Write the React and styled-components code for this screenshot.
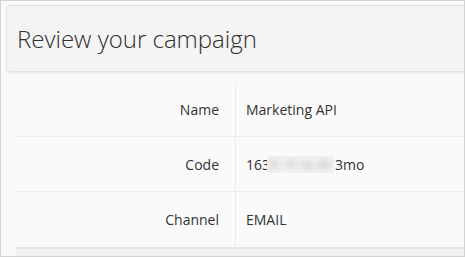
import React from 'react';
import styled, { createGlobalStyle } from 'styled-components';

const Global = createGlobalStyle`
  html, body {
    margin: 0;
    padding: 0;
    background: #ffffff;
  }
  body {
    font-family: "Open Sans", "Noto Sans", sans-serif;
    color: #333;
  }
`;

const Frame = styled.div`
  width: 465px;
  height: 257px;
  box-sizing: border-box;
  border: 1px solid #d3d3d3;
  background: #fafafa;
  overflow: hidden;
  padding: 4px 0 0 5px;
  display: flex;
  flex-direction: column;
  & > * {
    flex-shrink: 0;
  }
`;

const Header = styled.div`
  height: 67px;
  box-sizing: border-box;
  margin-right: -6px;
  background: #f4f4f4;
  border: 1px solid #e2e2e2;
  border-radius: 3px;
  box-shadow: 0 1px 2px rgba(0, 0, 0, 0.08);
  display: flex;
  align-items: center;
  padding-left: 10px;
  h1 {
    margin: 0;
    font-size: 24px;
    font-weight: 300;
    color: #2f2f2f;
  }
`;

const Table = styled.div`
  margin: 11px -4px 0 10px;
  display: flex;
  flex-direction: column;
  & > * {
    flex-shrink: 0;
  }
`;

const Row = styled.div`
  display: grid;
  grid-template-columns: 220px 1fr;
  height: ${(p) => p.h}px;
  border-bottom: 1px solid ${(p) => (p.last ? '#e6e6e6' : '#ececec')};
  box-sizing: border-box;
`;

const Label = styled.div`
  display: flex;
  align-items: center;
  justify-content: flex-end;
  padding-right: 16px;
  border-right: 1px solid #ececec;
  font-size: 14px;
  color: #333;
`;

const Value = styled.div`
  display: flex;
  align-items: center;
  padding-left: 10px;
  font-size: 14px;
  color: #333;
`;

const Redacted = styled.span`
  display: inline-block;
  width: 67px;
  height: 17px;
  margin: 0 1px 0 -3px;
  overflow: hidden;
  background: #f2f2f2;
  &::before {
    content: '';
    display: block;
    width: 100%;
    height: 100%;
    filter: blur(3px);
    background:
      radial-gradient(ellipse 8px 6px at 10% 50%, #c8c8c8, transparent),
      radial-gradient(ellipse 9px 6px at 35% 45%, #d0d0d0, transparent),
      radial-gradient(ellipse 9px 6px at 60% 55%, #cacaca, transparent),
      radial-gradient(ellipse 10px 6px at 85% 50%, #c4c4c4, transparent);
  }
`;

const Footer = styled.div`
  height: 12px;
  background: #f0f0f0;
  border-top: 1px solid #e4e4e4;
`;

export default function App() {
  return (
    <Frame>
      <Global />
      <Header>
        <h1>Review your campaign</h1>
      </Header>
      <Table>
        <Row h={54}>
          <Label>Name</Label>
          <Value>Marketing API</Value>
        </Row>
        <Row h={55}>
          <Label>Code</Label>
          <Value>
            163
            <Redacted />
            3mo
          </Value>
        </Row>
        <Row h={56} last>
          <Label>Channel</Label>
          <Value>EMAIL</Value>
        </Row>
        <Footer />
      </Table>
    </Frame>
  );
}
